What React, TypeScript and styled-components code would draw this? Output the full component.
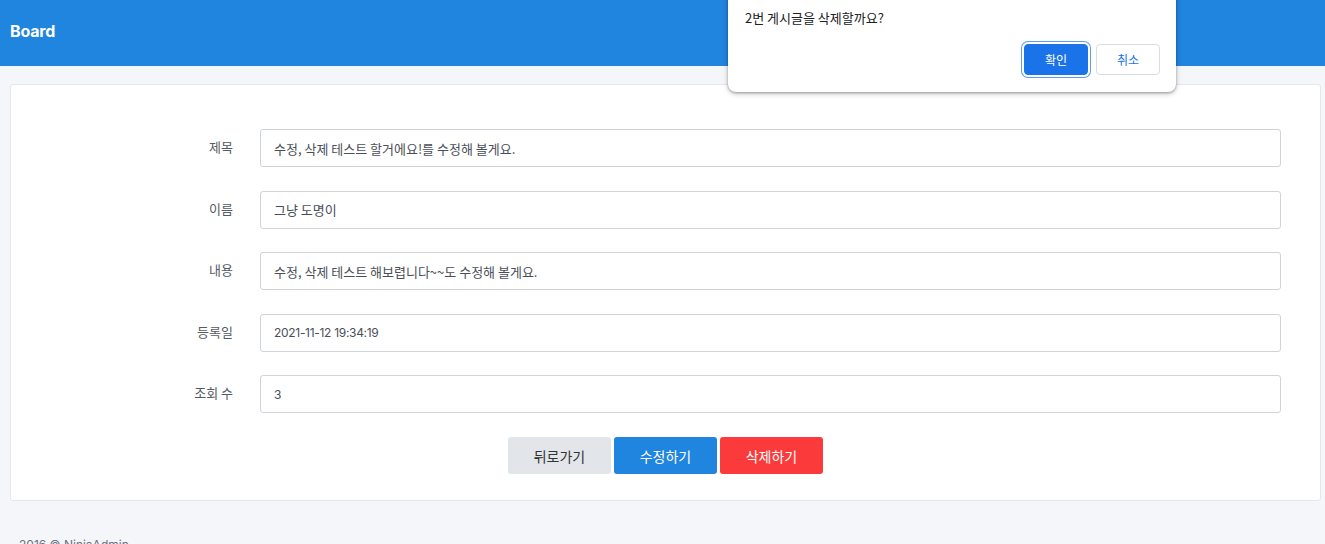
import React from "react"
import styled, { createGlobalStyle } from "styled-components"

const GlobalStyle = createGlobalStyle`
  html, body {
    margin: 0;
    padding: 0;
    background: #f5f6fa;
    font-family: "Noto Sans CJK KR", "Noto Sans", sans-serif;
    overflow: hidden;
  }
  * { box-sizing: border-box; }
`

const Page = styled.div`
  min-height: 544px;
  display: flex;
  flex-direction: column;
`

const TopBar = styled.header`
  height: 66px;
  background: #1f85de;
  display: flex;
  align-items: center;
  padding: 0 10px 4px;
`

const Brand = styled.h1`
  margin: 0;
  color: #fff;
  font-family: "Inter", "Noto Sans", sans-serif;
  font-size: 16px;
  font-weight: 700;
  letter-spacing: -0.2px;
`

const Content = styled.main`
  padding: 18px 4px 0 10px;
`

const Card = styled.section`
  background: #fff;
  border: 1px solid #e5e7eb;
  border-radius: 3px;
  padding: 44px 39px 26px 10px;
`

const Form = styled.form`
  display: grid;
  grid-template-columns: 212px 1fr;
  column-gap: 27px;
  row-gap: 23.5px;
  align-items: center;
`

const Label = styled.label`
  text-align: right;
  font-size: 13px;
  color: #555b63;
  padding-bottom: 3px;
`

const Field = styled.input`
  height: 38px;
  width: 100%;
  border: 1px solid #cfd3da;
  border-radius: 3px;
  padding: 0 13px;
  font-size: 13px;
  color: #4a4f57;
  font-family: "Noto Sans CJK KR", sans-serif;
  background: #fff;
  outline: none;
`

const DateField = styled(Field)`
  font-family: "Inter", "Noto Sans", sans-serif;
  font-size: 12px;
  letter-spacing: -0.3px;
`

const Actions = styled.div`
  grid-column: 1 / -1;
  display: flex;
  justify-content: center;
  gap: 3px;
  margin-top: 0.5px;
  padding-left: 29px;
`

const variants = {
  back: { bg: "#e2e5e9", color: "#333" },
  edit: { bg: "#1f85de", color: "#fff" },
  remove: { bg: "#fb3b3b", color: "#fff" },
}

const ActionButton = styled.button<{ $variant: keyof typeof variants }>`
  width: 103px;
  height: 37px;
  border: none;
  border-radius: 3px;
  font-size: 14px;
  font-family: "Noto Sans CJK KR", sans-serif;
  background: ${(p) => variants[p.$variant].bg};
  color: ${(p) => variants[p.$variant].color};
`

const Footer = styled.footer`
  padding: 36px 19px 0;
  font-family: "Inter", "Noto Sans", sans-serif;
  font-size: 12px;
  color: #6b7280;
`

const Dialog = styled.div`
  position: absolute;
  left: 728px;
  top: -8px;
  width: 448px;
  height: 100px;
  background: #fff;
  border-radius: 8px;
  box-shadow: 0 1px 3px rgba(0, 0, 0, 0.35), 0 2px 6px rgba(0, 0, 0, 0.15);
  padding: 16px 16px 0 17px;
  display: flex;
  flex-direction: column;
  font-family: "Noto Sans CJK KR", sans-serif;
`

const DialogText = styled.p`
  margin: 0;
  font-size: 13px;
  color: #202124;
`

const DialogActions = styled.div`
  display: flex;
  justify-content: flex-end;
  gap: 8px;
  margin-top: 17px;
`

const DialogButton = styled.button<{ $primary?: boolean }>`
  width: 64px;
  height: 31px;
  border-radius: 4px;
  font-size: 12px;
  font-family: "Noto Sans CJK KR", sans-serif;
  background: ${(p) => (p.$primary ? "#1a73e8" : "#fff")};
  color: ${(p) => (p.$primary ? "#fff" : "#1a73e8")};
  border: 1px solid ${(p) => (p.$primary ? "#1a73e8" : "#dadce0")};
  box-shadow: ${(p) => (p.$primary ? "0 0 0 2px #fff, 0 0 0 3px #5f9cf0" : "none")};
`

export default function App() {
  return (
    <>
      <GlobalStyle />
      <Page>
        <TopBar>
          <Brand>Board</Brand>
        </TopBar>
        <Content>
          <Card>
            <Form onSubmit={(e) => e.preventDefault()}>
              <Label>제목</Label>
              <Field readOnly value="수정, 삭제 테스트 할거에요!를 수정해 볼게요." />
              <Label>이름</Label>
              <Field readOnly value="그냥 도명이" />
              <Label>내용</Label>
              <Field readOnly value="수정, 삭제 테스트 해보렵니다~~도 수정해 볼게요." />
              <Label>등록일</Label>
              <DateField readOnly value="2021-11-12 19:34:19" />
              <Label>조회 수</Label>
              <DateField readOnly value="3" />
              <Actions>
                <ActionButton type="button" $variant="back">뒤로가기</ActionButton>
                <ActionButton type="button" $variant="edit">수정하기</ActionButton>
                <ActionButton type="button" $variant="remove">삭제하기</ActionButton>
              </Actions>
            </Form>
          </Card>
        </Content>
        <Footer>2016 © NinjaAdmin</Footer>
      </Page>
      <Dialog>
        <DialogText>2번 게시글을 삭제할까요?</DialogText>
        <DialogActions>
          <DialogButton $primary>확인</DialogButton>
          <DialogButton>취소</DialogButton>
        </DialogActions>
      </Dialog>
    </>
  )
}
